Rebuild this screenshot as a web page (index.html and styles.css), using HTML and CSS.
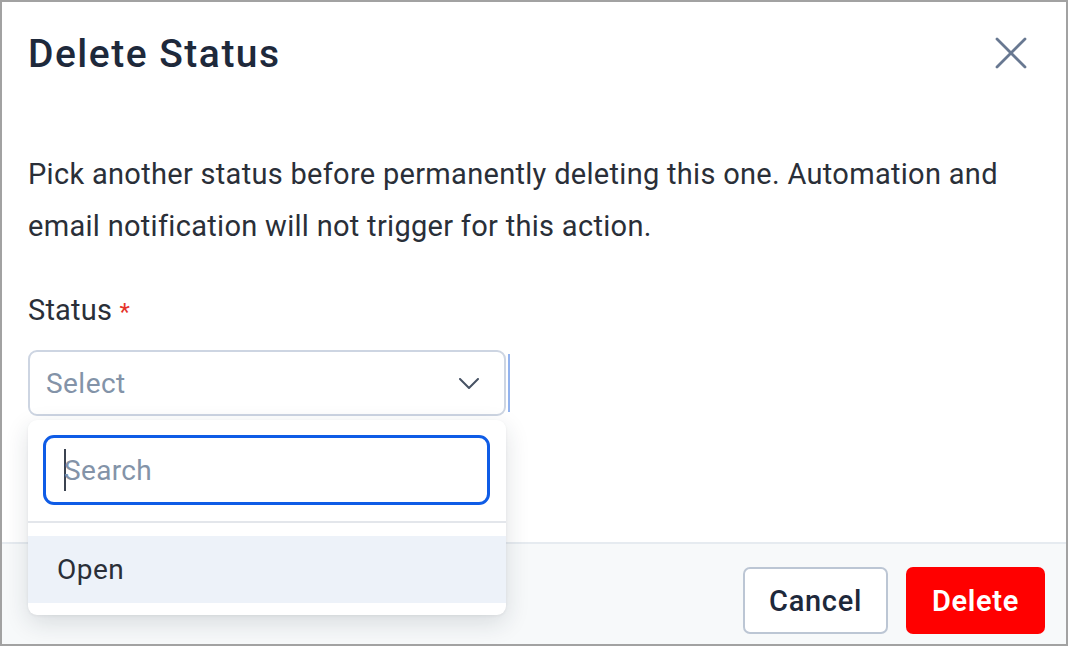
FILE: index.html
```html
<!DOCTYPE html>
<html lang="en">

<head>
    <meta charset="UTF-8">
    <meta name="viewport" content="width=device-width, initial-scale=1.0">
    <title>Delete Status</title>
    <link rel="stylesheet" href="styles.css">
</head>

<body>
    <div class="frame">
        <div class="modal">
            <div class="modal-header">
                <h2 class="modal-title">Delete Status</h2>
                <button class="close-btn" aria-label="Close">
                    <svg width="32" height="32" viewBox="0 0 32 32" fill="none" stroke="currentColor" stroke-width="2.8" stroke-linecap="round">
                        <line x1="2" y1="2" x2="30" y2="30" />
                        <line x1="30" y1="2" x2="2" y2="30" />
                    </svg>
                </button>
            </div>

            <div class="modal-body">
                <p class="intro">Pick another status before permanently deleting this one. Automation and email notification will not trigger for this action.</p>

                <label class="field-label">Status <span class="required">*</span></label>
                <div class="select-wrap">
                    <div class="select-box">
                        <span class="select-placeholder">Select</span>
                        <svg class="chevron" width="20" height="11" viewBox="0 0 20 11" fill="none" stroke="currentColor" stroke-width="2" stroke-linecap="round" stroke-linejoin="round">
                            <polyline points="1,1 10,10 19,1" />
                        </svg>
                    </div>

                    <div class="dropdown">
                        <div class="search-row">
                            <div class="search-input"><span class="caret"></span><span class="search-placeholder">Search</span></div>
                        </div>
                        <ul class="options">
                            <li class="option active">Open</li>
                        </ul>
                    </div>
                </div>
            </div>

            <div class="modal-footer">
                <button class="btn btn-cancel">Cancel</button>
                <button class="btn btn-delete">Delete</button>
            </div>
        </div>
    </div>
</body>

</html>
```

FILE: styles.css
```css
:root {
    --text-dark: #1e293b;
    --text-body: #2a2f38;
    --muted: #8393a8;
    --border: #cdd5e2;
    --focus: #0f5ce6;
    --danger: #ff0000;
    --footer-bg: #f7f9fa;
}

* {
    box-sizing: border-box;
}

body {
    margin: 0;
    background: #ffffff;
    font-family: Roboto, "Liberation Sans", Arial, sans-serif;
}

.frame {
    width: 1068px;
    height: 646px;
    border: 2px solid #a2a2a2;
    overflow: hidden;
}

.modal {
    height: 100%;
    display: flex;
    flex-direction: column;
    background: #ffffff;
}

.modal-header {
    display: flex;
    align-items: flex-start;
    justify-content: space-between;
    padding: 30px 39px 0 26px;
}

.modal-title {
    margin: 0;
    font-size: 39px;
    line-height: 44px;
    font-weight: 500;
    letter-spacing: 1.5px;
    color: var(--text-dark);
}

.close-btn {
    margin-top: 5px;
    padding: 0;
    width: 32px;
    height: 32px;
    border: none;
    background: none;
    color: #687891;
    cursor: pointer;
}

.modal-body {
    flex: 1;
    padding: 72px 26px 0 26px;
}

.intro {
    margin: 0;
    font-size: 29px;
    line-height: 52px;
    letter-spacing: 0.3px;
    color: var(--text-body);
}

.field-label {
    display: block;
    margin-top: 38px;
    font-size: 29px;
    line-height: 40px;
    letter-spacing: 0.2px;
    color: var(--text-body);
}

.required {
    color: #e5332a;
    font-size: 24px;
}

.select-wrap {
    position: relative;
    width: 478px;
    margin-top: 18px;
}

.select-box {
    position: relative;
    height: 66px;
    display: flex;
    align-items: center;
    justify-content: space-between;
    padding: 0 25px 0 16px;
    border: 2px solid var(--border);
    border-radius: 9px;
    background: #ffffff;
}

.select-box::after {
    content: "";
    position: absolute;
    right: -6px;
    top: 2px;
    width: 2px;
    height: 58px;
    background: #93b3ee;
}

.select-placeholder {
    font-size: 28px;
    letter-spacing: 0.45px;
    color: var(--muted);
}

.chevron {
    color: #475264;
}

.dropdown {
    position: absolute;
    top: 70px;
    left: 0;
    width: 478px;
    background: #ffffff;
    border-radius: 9px;
    box-shadow: 0 8px 24px rgba(30, 41, 59, 0.14), 0 1px 3px rgba(30, 41, 59, 0.06);
    padding-bottom: 12px;
    z-index: 5;
}

.search-row {
    padding: 15px 16px 16px 15px;
    border-bottom: 2px solid #e3e6eb;
}

.search-input {
    height: 70px;
    display: flex;
    align-items: center;
    padding-left: 18px;
    border: 3px solid var(--focus);
    border-radius: 11px;
}

.caret {
    width: 2px;
    height: 42px;
    background: #3b4350;
}

.search-placeholder {
    font-size: 28px;
    letter-spacing: 0.35px;
    color: var(--muted);
    margin-left: -2px;
}

.options {
    list-style: none;
    margin: 13px 0 0 0;
    padding: 0;
}

.option {
    height: 67px;
    display: flex;
    align-items: center;
    padding-left: 29px;
    font-size: 28px;
    letter-spacing: 0.45px;
    color: var(--text-body);
}

.option.active {
    background: #edf2f9;
}

.modal-footer {
    height: 102px;
    display: flex;
    justify-content: flex-end;
    align-items: flex-start;
    gap: 18px;
    padding: 23px 21px 0 0;
    border-top: 2px solid #e6ebf0;
    background: var(--footer-bg);
}

.btn {
    height: 67px;
    padding: 0;
    border-radius: 7px;
    font-family: inherit;
    font-size: 29px;
    letter-spacing: 0.7px;
    cursor: pointer;
}

.btn-cancel {
    width: 145px;
    background: #ffffff;
    border: 2px solid #bcc6d4;
    color: var(--text-dark);
    font-weight: 500;
}

.btn-delete {
    width: 139px;
    background: var(--danger);
    border: none;
    color: #ffffff;
    font-weight: 600;
}
```
